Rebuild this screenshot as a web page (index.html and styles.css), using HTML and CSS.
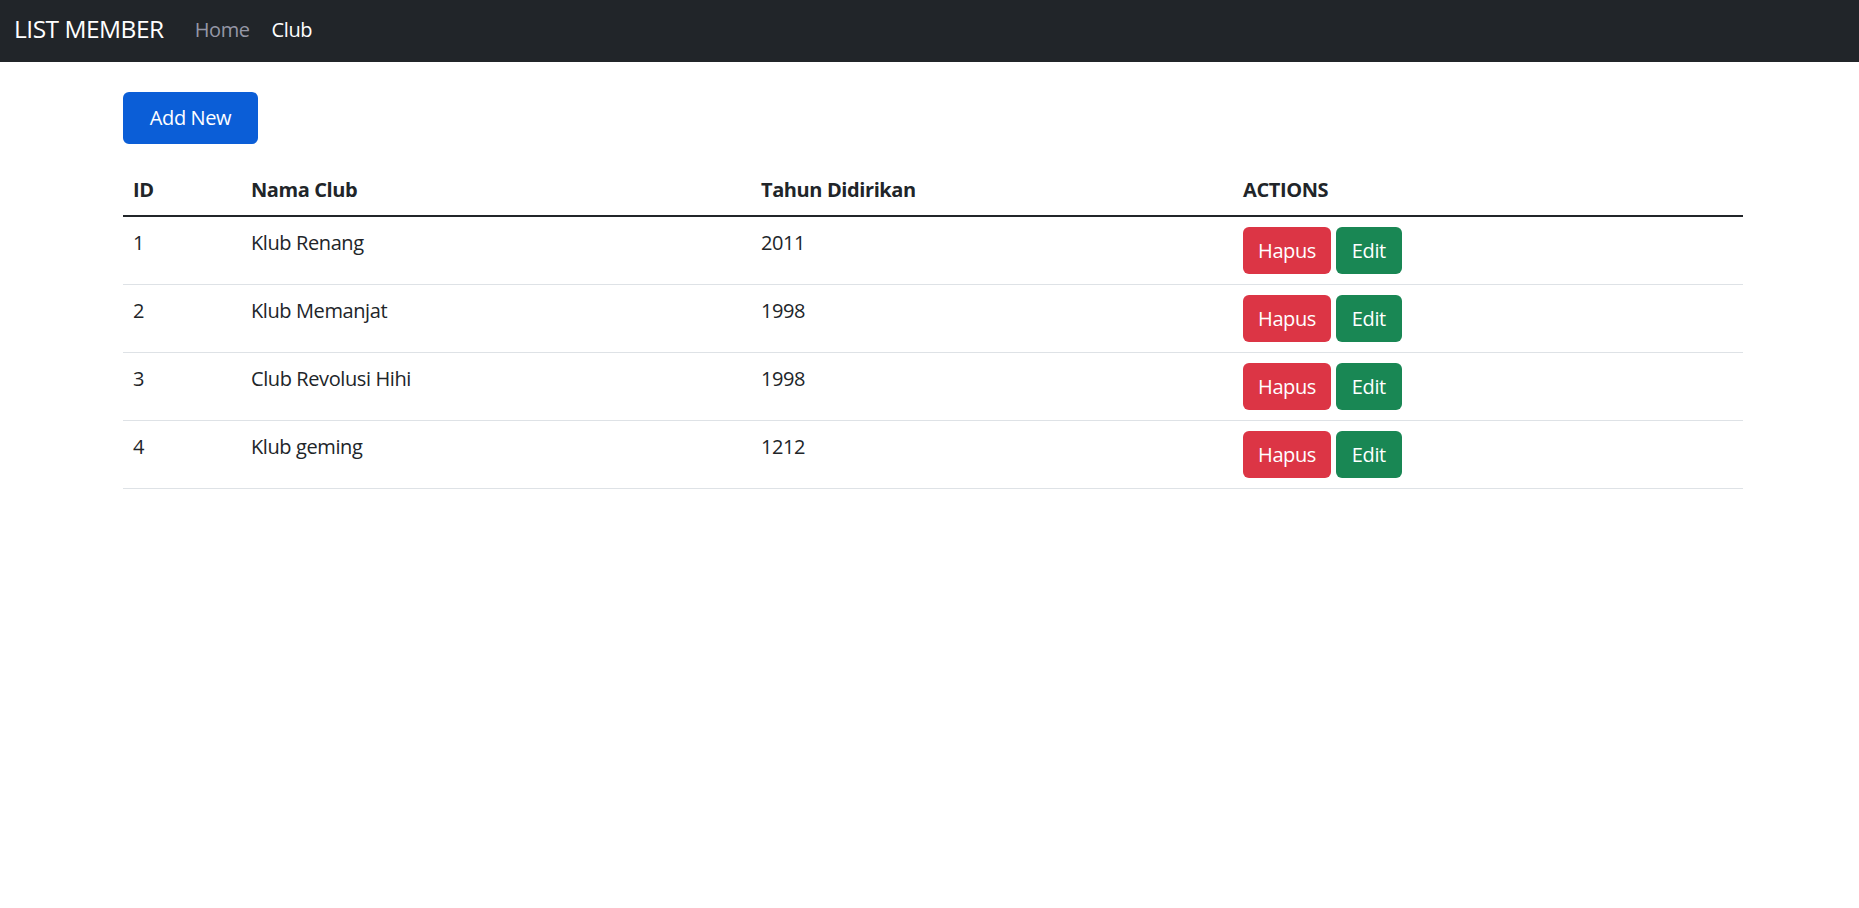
FILE: index.html
```html
<!DOCTYPE html>
<html lang="id">
<head>
<meta charset="utf-8">
<title>List Member</title>
<link rel="stylesheet" href="styles.css">
</head>
<body>
<nav class="navbar">
  <a class="brand" href="#">LIST MEMBER</a>
  <a class="nav-link" href="#">Home</a>
  <a class="nav-link active" href="#">Club</a>
</nav>
<main class="container">
  <a class="btn btn-add" href="#">Add New</a>
  <table class="table">
    <colgroup>
      <col class="c-id"><col class="c-nama"><col class="c-tahun"><col class="c-act">
    </colgroup>
    <thead>
      <tr><th>ID</th><th>Nama Club</th><th>Tahun Didirikan</th><th>ACTIONS</th></tr>
    </thead>
    <tbody>
      <tr><td>1</td><td>Klub Renang</td><td>2011</td><td><a class="btn btn-sm-red" href="#">Hapus</a> <a class="btn btn-sm-green" href="#">Edit</a></td></tr>
      <tr><td>2</td><td>Klub Memanjat</td><td>1998</td><td><a class="btn btn-sm-red" href="#">Hapus</a> <a class="btn btn-sm-green" href="#">Edit</a></td></tr>
      <tr><td>3</td><td>Club Revolusi Hihi</td><td>1998</td><td><a class="btn btn-sm-red" href="#">Hapus</a> <a class="btn btn-sm-green" href="#">Edit</a></td></tr>
      <tr><td>4</td><td>Klub geming</td><td>1212</td><td><a class="btn btn-sm-red" href="#">Hapus</a> <a class="btn btn-sm-green" href="#">Edit</a></td></tr>
    </tbody>
  </table>
</main>
</body>
</html>
```
FILE: styles.css
```css
* { box-sizing: border-box; }
html, body { margin: 0; padding: 0; }
body {
  font-family: "Open Sans", "Noto Sans", sans-serif;
  font-size: 20px;
  line-height: 30px;
  color: #212529;
  background: #fff;
  letter-spacing: -0.4px;
}
a { text-decoration: none; }

.navbar {
  height: 62px;
  background: #212529;
  display: flex;
  align-items: center;
  padding: 0 14px 4px;
}
.brand {
  color: #fff;
  font-size: 24.5px;
  margin-right: 20px;
  letter-spacing: -0.5px;
}
.nav-link {
  color: #9597a6;
  padding: 1px 11px 0;
}
.nav-link.active { color: #fff; }

.container {
  width: 1620px;
  margin-left: 123px;
  padding-top: 30px;
}

.btn {
  display: inline-block;
  border-radius: 6px;
  color: #fff;
  text-align: center;
  vertical-align: top;
}
.btn-add {
  background: #0b5ed7;
  height: 52px;
  line-height: 52px;
  width: 135px;
  margin-bottom: 20px;
}
.btn-sm-red, .btn-sm-green {
  height: 47px;
  line-height: 47px;
}
.btn-sm-red { background: #dc3545; width: 88px; }
.btn-sm-green { background: #198754; width: 66px; }

.table {
  width: 1620px;
  border-collapse: collapse;
  table-layout: fixed;
}
.c-id { width: 118px; }
.c-nama { width: 510px; }
.c-tahun { width: 482px; }
.c-act { width: 510px; }

.table th, .table td {
  padding: 10px;
  text-align: left;
  vertical-align: top;
}
.table th {
  font-weight: 700;
  padding-top: 11px;
  border-bottom: 2px solid #212529;
}
.table td {
  border-bottom: 1px solid #dee2e6;
  white-space: nowrap;
}
.table td:not(:last-child) { padding-top: 11px; padding-bottom: 9px; }
```
